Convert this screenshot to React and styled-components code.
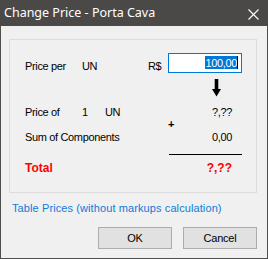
import React from 'react'
import styled, { createGlobalStyle } from 'styled-components'

const Global = createGlobalStyle`
    html, body {
        margin:0;
        padding:0;
        background:#f0f0f0;
    }
    * {
        box-sizing:border-box;
    }
`;

const App = () => {
  return (
    <Window>
      <Global />
      <TitleBar>
        <Title>Change Price - Porta Cava</Title>
        <CloseIcon width="11" height="11" viewBox="0 0 11 11">
          <path d="M0.5 0.5 L10.5 10.5 M10.5 0.5 L0.5 10.5" stroke="#fff" strokeWidth="1.1" fill="none" />
        </CloseIcon>
      </TitleBar>
      <Body>
        <GroupBox>
          <Row height={20} top={13}>
            <Label>Price per</Label>
            <Label>UN</Label>
            <span />
            <Label>R$</Label>
            <TextBox>
              <Selected>100,00</Selected>
              <Caret />
            </TextBox>
          </Row>
          <Row height={18} top={6}>
            <ArrowCell>
              <svg width="9" height="18" viewBox="0 0 9 18">
                <path d="M2.7 0 H6.3 V10 H9 L4.5 17.5 L0 10 H2.7 Z" fill="#000" />
              </svg>
            </ArrowCell>
          </Row>
          <Row top={9} line={12}>
            <Label>Price of</Label>
            <Label>1</Label>
            <Label>UN</Label>
            <span />
            <Value>?,??</Value>
          </Row>
          <Row line={12}>
            <Plus>+</Plus>
          </Row>
          <Row top={1}>
            <Label wide>Sum of Components</Label>
            <Value>0,00</Value>
          </Row>
          <Row top={10}>
            <SumLine />
          </Row>
          <Row top={7}>
            <Label total>Total</Label>
            <span />
            <span />
            <span />
            <Value total>?,??</Value>
          </Row>
        </GroupBox>
        <Link>Table Prices (without markups calculation)</Link>
        <Buttons>
          <Button>OK</Button>
          <Button>Cancel</Button>
        </Buttons>
      </Body>
    </Window>
  )
}

export default App

const Window = styled.div`
    width:268px;
    height:259px;
    border:1px solid #4f4f4f;
    border-top:none;
    display:flex;
    flex-direction:column;
    font-family:"Liberation Sans", Arial, sans-serif;
    font-size:11px;
    color:#000;
`;
const TitleBar = styled.div`
    height:26px;
    background:#4a4947;
    display:flex;
    align-items:center;
    justify-content:space-between;
    padding:0 9px 0 3px;
    margin:0 -1px;
`;
const Title = styled.div`
    font-family:"Noto Sans", "Open Sans", sans-serif;
    font-size:12.5px;
    color:#fff;
    padding-left:1px;
    padding-bottom:1px;
`;
const CloseIcon = styled.svg`
    display:block;
    margin-top:2px;
`;
const Body = styled.div`
    flex:1;
    background:#f0f0f0;
    padding:13px 10px 0 8px;
    display:flex;
    flex-direction:column;
`;
const GroupBox = styled.div`
    height:154px;
    border:1px solid #dcdcdc;
    padding:0 0 0 15px;
    display:flex;
    flex-direction:column;
`;
const Row = styled.div`
    display:grid;
    grid-template-columns:57px 23px 43px 20px 74px;
    align-items:end;
    margin-top:${p => p.top || 0}px;
    height:${p => p.height ? p.height + 'px' : 'auto'};
    line-height:${p => p.line || 13}px;
`;
const Label = styled.span`
    white-space:nowrap;
    grid-column:${p => p.wide ? '1 / 5' : 'auto'};
    color:${p => p.total ? '#ff0000' : '#000'};
    font-weight:${p => p.total ? 'bold' : 'normal'};
    font-size:${p => p.total ? 12 : 11}px;
    letter-spacing:${p => p.total ? 0 : -0.35}px;
`;
const TextBox = styled.div`
    grid-column:5;
    height:20px;
    border:1px solid #0078d7;
    background:#fff;
    padding:2px 3px 0 0;
    display:flex;
    justify-content:flex-end;
    align-items:flex-start;
    align-self:start;
`;
const Selected = styled.span`
    display:inline-block;
    background:#0078d7;
    color:#fff;
    letter-spacing:-0.35px;
    line-height:13px;
    padding-top:1px;
    height:13px;
`;
const Caret = styled.span`
    display:inline-block;
    width:1px;
    height:13px;
    background:#000;
`;
const ArrowCell = styled.div`
    grid-column:5;
    padding-left:44px;
    height:18px;
    svg{
        display:block;
    }
`;
const Value = styled.span`
    grid-column:5;
    text-align:right;
    padding-right:10px;
    color:${p => p.total ? '#ff0000' : '#000'};
    font-weight:${p => p.total ? 'bold' : 'normal'};
    font-size:${p => p.total ? 12 : 11}px;
    letter-spacing:${p => p.total ? 0 : -0.35}px;
`;
const Plus = styled.span`
    grid-column:5;
    font-weight:bold;
`;
const SumLine = styled.div`
    grid-column:5;
    height:1px;
    margin-left:1px;
    background:#000;
`;
const Link = styled.div`
    margin:9px 0 0 3px;
    line-height:13px;
    color:#0f7bd8;
    letter-spacing:0.1px;
`;
const Buttons = styled.div`
    display:flex;
    justify-content:flex-end;
    gap:11px;
    margin-top:12px;
`;
const Button = styled.button`
    width:74px;
    height:22px;
    border:1px solid #adadad;
    background:#e1e1e1;
    font-family:"Liberation Sans", Arial, sans-serif;
    font-size:11px;
    letter-spacing:-0.2px;
    color:#000;
    padding:0;
    line-height:13px;
`;
